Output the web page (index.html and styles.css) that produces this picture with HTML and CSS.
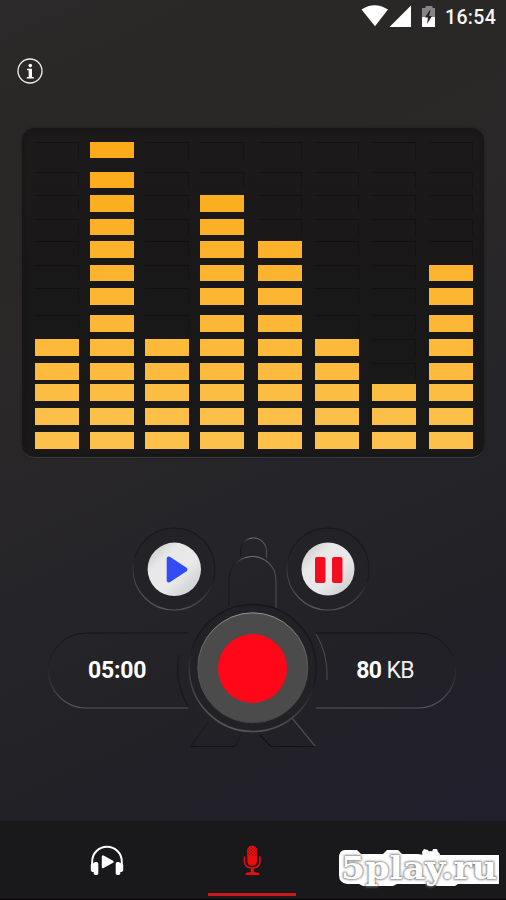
FILE: index.html
```html
<!DOCTYPE html>
<html lang="en">
<head>
<meta charset="utf-8">
<title>Voice recorder</title>
<link rel="stylesheet" href="styles.css">
</head>
<body>
<main class="app">
  <header class="status">
    <svg class="status-icons" viewBox="0 0 80 26" aria-hidden="true">
      <path fill="#fff" d="M1.5 9.5Q14.500 1 28 9.500L15 26.200Z"/>
      <path fill="#fff" d="M51 5.500V27H29.500Z"/>
      <path fill="#858585" d="M65.500 6h7v2H75v9H62V8h3.500Z"/>
      <path fill="#fff" d="M62 17h13v10H62Z"/>
      <path fill="#242323" d="M69.500 10.500l-4.500 7h3l-1 6.500 5-8h-3l1.500-5.500Z"/>
    </svg>
    <span class="clock">16:54</span>
  </header>

  <div class="toolbar">
    <svg class="info" viewBox="0 0 26 26" aria-label="Info">
      <circle cx="13" cy="13" r="12" fill="none" stroke="#eee" stroke-width="1.300"/>
      <circle cx="13.300" cy="7.600" r="1.800" fill="#fff"/>
      <path fill="#fff" d="M10 10.800h5v8.200h1.800v1.500H9.800V19h1.900v-6.700H10Z"/>
    </svg>
  </div>

  <section class="meter" id="meter"></section>

  <section class="console">
    <svg class="grooves" viewBox="0 520 506 240" aria-hidden="true">
      <defs>
        <linearGradient id="ring" x1=".65" y1="0" x2=".35" y2="1">
          <stop offset="0" stop-color="#17161a"/><stop offset=".48" stop-color="#1b1a1f"/>
          <stop offset=".7" stop-color="#3c3b40"/><stop offset="1" stop-color="#59585c"/>
        </linearGradient>
        <linearGradient id="pill" x1="0" y1="0" x2="0" y2="1">
          <stop offset="0" stop-color="#151418"/><stop offset=".45" stop-color="#232227"/>
          <stop offset="1" stop-color="#56555a"/>
        </linearGradient>
        <linearGradient id="arch" x1="0" y1="0" x2="1" y2="0">
          <stop offset="0" stop-color="#18171b"/><stop offset=".12" stop-color="#222126"/>
          <stop offset=".4" stop-color="#78777b"/><stop offset="1" stop-color="#49484d"/>
        </linearGradient>
        <linearGradient id="cap" x1="0" y1="0" x2="1" y2="1">
          <stop offset=".1" stop-color="#cfcdcd"/><stop offset=".3" stop-color="#e8e8e8"/>
          <stop offset=".6" stop-color="#e9e9ea"/><stop offset="1" stop-color="#c5c6ca"/>
        </linearGradient>
        <linearGradient id="rim" x1="0" y1="0" x2="0" y2="1">
          <stop offset="0" stop-color="#929292"/><stop offset=".5" stop-color="#555"/>
          <stop offset="1" stop-color="#444"/>
        </linearGradient>
      </defs>
      <g fill="none" stroke-width="1.200">
        <path stroke="url(#pill)" d="M188 633H86a37.500 37.500 0 0 0 0 75H188"/>
        <path stroke="url(#pill)" d="M316 633H418a37.500 37.500 0 0 1 0 75H316"/>
        <path stroke="#19181c" d="M179 655Q174 682 188 706"/>
        <path stroke="#47464b" d="M316 634Q328 654 327 680"/>
        <path stroke="url(#arch)" d="M240.500 556v-5a13 13 0 0 1 26 0v7"/>
        <path stroke="url(#arch)" d="M229 606V580a23.500 23.500 0 0 1 47 0v28"/>
        <path stroke="#1c1b1f" d="M208 722L191 746.500M235 746.500L241 735"/>
        <path stroke="#141317" d="M191 746.500H235M260 735L271 746.500H315"/>
        <path stroke="#4c4b50" d="M292 718L315 746"/>
        <circle cx="252.800" cy="668" r="63.500" fill="#222126" stroke="url(#ring)" stroke-width="1.500"/>
        <circle cx="174" cy="569" r="41" fill="#232227" stroke="url(#ring)"/>
        <circle cx="328" cy="569" r="41" fill="#232227" stroke="url(#ring)"/>
      </g>
      <circle cx="252.800" cy="667.800" r="55" fill="#4b4b4b" stroke="url(#rim)"/>
      <circle cx="252.500" cy="668.500" r="34.500" fill="#ff0718"/>
      <circle cx="174.300" cy="569.300" r="26.700" fill="url(#cap)"/>
      <path fill="#314cf5" stroke="#314cf5" stroke-width="4" stroke-linejoin="round" d="M168.700 558.500V580.500L185.500 569.500Z"/>
      <circle cx="328" cy="569" r="26.500" fill="url(#cap)"/>
      <rect x="315" y="557" width="10.500" height="26" rx="2" fill="#f40d20"/>
      <rect x="332" y="557" width="10.500" height="26" rx="2" fill="#f40d20"/>
    </svg>
    <div class="readouts">
      <span class="time">05:00</span>
      <span class="size"><b>80</b> KB</span>
    </div>
  </section>

  <nav class="tabs">
    <svg class="tab-headphones" viewBox="0 0 34 31" aria-label="Recordings">
      <path fill="none" stroke="#fff" stroke-width="2" d="M2.200 20V16.500a14.800 14.800 0 0 1 29.600 0V20"/>
      <path fill="#fff" d="M.8 19.500q1-1.500 3.200-1.500v9Q.8 27 .8 25ZM33.200 19.500q-1-1.500-3.200-1.500v9q3.200 0 3.200-2Z"/>
      <rect x="3.700" y="17" width="4.600" height="13" rx="1.700" fill="#fff"/>
      <rect x="25.700" y="17" width="4.600" height="13" rx="1.700" fill="#fff"/>
      <path fill="#fff" stroke="#fff" stroke-width="2.400" stroke-linejoin="round" d="M13 11.500V22L22.500 16.800Z"/>
    </svg>
    <div class="tab-active">
      <svg class="tab-mic" viewBox="0 0 18 31" aria-label="Record">
        <defs><pattern id="mesh" width="3" height="3" patternUnits="userSpaceOnUse"><rect width="3" height="3" fill="#ed1010"/><rect x=".3" y=".3" width="1" height="1" fill="#620c0f"/><rect x="1.800" y="1.800" width="1" height="1" fill="#620c0f"/></pattern></defs>
        <rect x="4.300" y=".7" width="9.700" height="20" rx="4.500" fill="#f00c0c"/>
        <path fill="url(#mesh)" d="M4.300 11V5.200a4.800 4.500 0 0 1 9.700 0V11Z"/>
        <path fill="none" stroke="#e80f10" stroke-width="1.600" d="M1.500 11.500V16q0 7 7.700 7t7.800-7v-4.500"/>
        <path fill="#e80f10" d="M7.800 23h3v4l4.600.8q1 .3 1 2.200H2.500q0-1.900 1-2.200l4.300-.8Z"/>
      </svg>
      <span class="underline"></span>
    </div>
    <svg class="watermark" viewBox="336 840 166 55">
      <defs><filter id="soft" x="-10%" y="-30%" width="120%" height="160%"><feGaussianBlur stdDeviation="1.300"/></filter></defs>
      <g fill="#fff">
        <circle cx="430.500" cy="860" r="9"/>
        <path d="M422 852l2-3 4 1 1 2h3l1-3h4l1 3 2 2-2 5h-15Z"/>
        <path d="M345 850h12l4 4h22l4-4h11l4 4h16l6 1h75v29h-41l-3 2h-18l-4-2h-36l-4 2h-30l-4-2h-12q-8-1-8-9v-17q0-8 6-8Z"/>
      </g>
      <text class="mark-shade" x="341" y="878.500" textLength="156" lengthAdjust="spacingAndGlyphs" filter="url(#soft)">5play.ru</text>
      <text class="mark-face" x="341" y="878.500" textLength="156" lengthAdjust="spacingAndGlyphs" aria-hidden="true">5play.ru</text>
    </svg>
  </nav>
</main>
<script src="script.js"></script>
</body>
</html>
```

FILE: styles.css
```css
* { box-sizing: border-box; }
body { margin: 0; background: #242328; font-family: Roboto, "Liberation Sans", sans-serif; color: #fff; }
.app {
  width: 506px; height: 900px; overflow: hidden;
  display: grid; grid-template-rows: 34px 94px 330px 62px 240px 61px 79px;
  background: linear-gradient(155deg, #2b2929 0%, #2a2827 12%, #2a2828 35%, #252428 56%, #222127 75%, #211f2c 92%, #222029 100%);
}
.status { display: flex; justify-content: flex-end; padding-right: 10px; }
.status-icons { width: 80px; height: 26px; margin-right: 5px; overflow: visible; }
.clock { width: 51px; font-size: 19.5px; line-height: 35px; font-weight: 500; letter-spacing: .35px; color: #f5f5f5; white-space: nowrap; }
.toolbar { padding: 24px 0 0 17px; }
.info { display: block; width: 26px; height: 26px; }

.meter {
  grid-row: 3; width: 462px; margin-left: 21.5px; padding: 13.7px 0 0 13.5px;
  display: grid; align-content: start;
  grid-template-columns: 55px 55px 55px 58px 57px 57px 57px 44px;
  grid-template-rows: 30px 23.5px 23.5px 22.5px 23.5px 23.5px 27px 24px 24px 21.2px 24px 23.600px 17px;
  background: linear-gradient(#1c191a, #191819 50%, #1a191a);
  border-radius: 13px;
  border-bottom: 1px solid #3b3a3e;
  box-shadow: inset 0 1px 4px #171516, 0 0 3px rgba(20,18,19,.4);
}
.cell { width: 43.5px; height: 17px; border-top: 1px solid #131112; border-right: 1px solid #151314; }
.cell.lit { height: 16.7px; border: 0; background: var(--tone); }

.console { grid-row: 5; display: grid; }
.console > * { grid-area: 1 / 1; }
.grooves { width: 506px; height: 240px; display: block; }
.readouts { display: flex; justify-content: space-between; padding: 136px 92px 0 88px; font-size: 23px; line-height: 30px; }
.time { font-weight: 700; letter-spacing: -.2px; }
.size { font-weight: 400; letter-spacing: -.6px; white-space: nowrap; color: #eee; }
.size b { font-weight: 700; color: #fff; }

.tabs { grid-row: 7; display: grid; grid-template-columns: 208px 88px 210px; background: #19181b; border-bottom: 1px solid #0d080b; }
.tab-headphones { width: 34px; height: 31px; margin: 24px 0 0 90px; }
.tab-active { display: flex; flex-direction: column; align-items: center; justify-content: space-between; padding: 24px 0 3px; }
.tab-mic { width: 18px; height: 31px; }
.underline { width: 88px; height: 3px; background: #c9191d; }
.watermark { width: 166px; height: 55px; margin: 19px 0 0 40px; }
.mark-shade, .mark-face { font: 700 31px "DejaVu Serif", serif; }
.mark-shade { fill: #666; stroke: #777; stroke-width: 1.5; }
.mark-face { fill: #fff; }
```

FILE: script.js
```js
const levels = [5, 13, 5, 11, 9, 5, 3, 8];
const rows = 13;
const meter = document.getElementById('meter');
for (let row = 0; row < rows; row++) {
  for (const level of levels) {
    const cell = document.createElement('span');
    cell.className = 'cell';
    if (rows - row <= level) {
      const t = row / (rows - 1);
      cell.classList.add('lit');
      cell.style.setProperty('--tone', `rgb(252, ${Math.round(170 + 23 * t)}, ${Math.round(25 + 50 * t)})`);
    }
    meter.appendChild(cell);
  }
}
```
